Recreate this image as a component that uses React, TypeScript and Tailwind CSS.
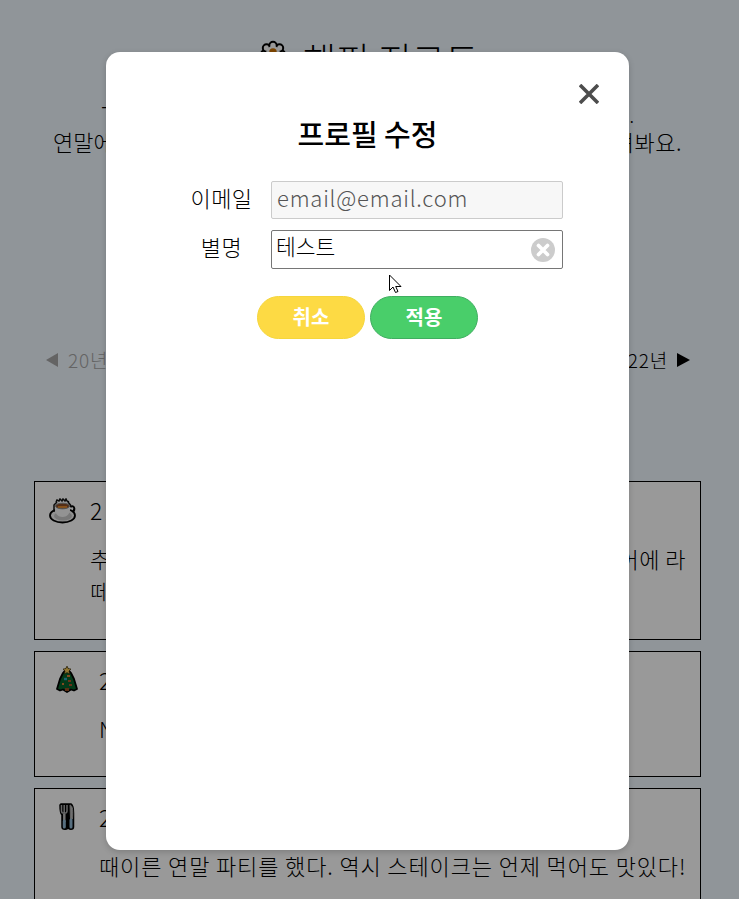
import type { ReactNode } from 'react'

const FlowerIcon = () => (
  <svg className="h-[28px] w-[26px]" viewBox="0 0 26 28">
    <g fill="#fff" stroke="#000" strokeWidth="2">
      <circle cx="4.500" cy="14" r="3.500" />
      <circle cx="21.500" cy="14" r="3.500" />
      <circle cx="6.500" cy="8" r="3.700" />
      <circle cx="19.500" cy="8" r="3.700" />
      <circle cx="13" cy="5.500" r="3.700" />
      <circle cx="9" cy="20" r="4" />
      <circle cx="17" cy="20" r="4" />
    </g>
    <circle cx="13" cy="13" r="7" fill="#fff" />
    <circle cx="13" cy="12" r="3.700" fill="#d07400" />
  </svg>
)

const CoffeeIcon = () => (
  <svg className="h-[26px] w-[28px]" viewBox="0 0 28 26">
    <path d="M21 9c5-3 6 4 1 6" fill="none" stroke="#000" strokeWidth="2" />
    <ellipse cx="13.5" cy="17.5" rx="12.5" ry="7" fill="#f0f0f0" stroke="#000" strokeWidth="1.8" />
    <ellipse cx="14" cy="18" rx="9" ry="4.5" fill="#c8c8c8" />
    <path d="M5.500 8c0 7 3 11 8 11s8-4 8-11l-2-3H8z" fill="#f5f5f5" />
    <path d="M5 14V7l3-3M21.500 9V7L19 4" fill="none" stroke="#111" strokeWidth="1.5" />
    <ellipse cx="13.5" cy="8" rx="7" ry="2.800" fill="#8b4c25" stroke="#8a8a8a" />
    <path d="M9 9h9" stroke="#db842e" strokeWidth="2" />
    <path d="M7 4l1-2 2 1 1-2 2 2 1-2 2 2 1-2 1 2 2 1" fill="none" stroke="#111" strokeWidth="1.5" />
  </svg>
)

const TreeIcon = () => (
  <svg className="h-[27px] w-[22px]" viewBox="0 0 22 27">
    <path d="M11 2L7 7l-3 6-3 10 3 1.500 3-1 4 2.500 4-2.500 3 1 3-1.500-3-10-3-6z" fill="#08612a" stroke="#000" strokeWidth="1.8" strokeLinejoin="round" />
    <path d="M9 22h4v3H9z" fill="#954e22" />
    <path d="M11 0l1.200 2.600 2.800.4-2 2 .5 3-2.500-1.400L8.500 8 9 5 7 3l2.800-.4z" fill="#f0c453" stroke="#2b2000" strokeWidth=".6" />
    <path d="M11 10h3M6 18h2" stroke="#dc7a35" strokeWidth="2" />
    <path d="M8 13h3" stroke="#29a3bf" strokeWidth="2.4" />
    <path d="M12 15h3M13 19h3" stroke="#b3542b" strokeWidth="2" />
  </svg>
)

const CutleryIcon = () => (
  <svg className="h-[27px] w-[16px]" viewBox="0 0 16 27">
    <path d="M2 1h10c2 1 2.500 4 2.500 9v14c0 3-5 3-5.500 0 0 3-6 3-6 0V12C1 10 1 7 1 2z" fill="#000" stroke="#000" strokeWidth="1.500" />
    <path d="M2.500 2v6c0 3 5.500 3 5.500 0V2M5.200 2v10" fill="none" stroke="#aaa" strokeWidth="1.500" />
    <path d="M5.300 11v8" stroke="#bbb" strokeWidth="2.500" />
    <path d="M11 2c3 1 3 6 2.500 14h-2z" fill="#bbb" stroke="#aaa" />
    <path d="M5.300 18v6M12 17v7" stroke="#91b9d6" strokeWidth="3" strokeLinecap="round" />
  </svg>
)

type CardProps = {
  icon: ReactNode
  date: string
  iconClass: string
  className: string
  children: ReactNode
}

const DiaryCard = ({ icon, date, iconClass, className, children }: CardProps) => (
  <article className={`flex shrink-0 border border-black bg-white ${className}`}>
    <div className={`shrink-0 ${iconClass}`}>{icon}</div>
    <div className="flex-1 whitespace-nowrap text-[22px] leading-8">
      <p className="mt-3 text-[23px] tracking-[2px]">{date}</p>
      <div className="mt-4">{children}</div>
    </div>
  </article>
)

const MainPage = () => (
  <main className="flex h-full flex-col bg-[#f0f8ff] pl-[34px] pr-[38px]">
    <h1 className="flex h-[80px] shrink-0 items-start justify-center gap-[17px] pl-[4px] pt-[40px] text-[36px] leading-[40px]">
      <FlowerIcon />
      <span className="-mt-[2px] tracking-[0.4px]">해피 지그트</span>
    </h1>
    <div className="mt-[15px] flex h-[63px] shrink-0 flex-col whitespace-nowrap pl-[19px] pr-[19px] text-[22px] leading-[22px]">
      <p className="flex h-[35px] justify-between pl-[48px] pr-[48px]">
        <span>一 년을 돌아보는</span>
        <span className="mt-[11px] text-[18px] leading-[18px]">일기장이에요.</span>
      </p>
      <p className="flex justify-between">
        <span>연말에 한 해를</span>
        <span className="tracking-[0.5px]">함께 그려봐요.</span>
      </p>
    </div>
    <nav className="mt-[186px] flex h-8 shrink-0 items-center justify-between pl-3 pr-[11px] text-[19px] tracking-[0.8px]">
      <span className="flex items-center gap-[10px] text-[#a7a7a7]">
        <svg className="h-[14px] w-3" viewBox="0 0 12 14"><path d="M12 0v14L0 7z" fill="currentColor" /></svg>
        20년
      </span>
      <span className="flex items-center gap-[9px]">
        22년
        <svg className="h-[14px] w-[13px]" viewBox="0 0 13 14"><path d="M0 0v14l13-7z" /></svg>
      </span>
    </nav>
    <section className="mt-[105px] flex shrink-0 flex-col gap-[11px]">
      <DiaryCard className="h-[159px]" iconClass="w-[55px] pl-[14px] pt-[16px]" icon={<CoffeeIcon />} date="21.12.27">
        <p className="flex justify-between pr-[14px]">
          <span>추운 날</span>
          <span className="tracking-[0.5px]">단어에 라</span>
        </p>
        <p>떼 한 잔</p>
      </DiaryCard>
      <DiaryCard className="h-[126px]" iconClass="w-[64px] pl-[21px] pt-[14px]" icon={<TreeIcon />} date="21.12.25">
        <p>New Year</p>
      </DiaryCard>
      <DiaryCard className="h-[159px]" iconClass="w-[64px] pl-[24px] pt-[14px]" icon={<CutleryIcon />} date="21.12.24">
        <p className="tracking-[0.87px]">때이른 연말 파티를 했다. 역시 스테이크는 언제 먹어도 맛있다!</p>
      </DiaryCard>
    </section>
  </main>
)

const ProfileModal = () => (
  <div className="absolute inset-0 bg-black/40 pl-[106px] pt-[52px]">
    <div role="dialog" className="flex h-[798px] w-[523px] flex-col rounded-[14px] bg-white shadow-[0_2px_6px_rgba(0,0,0,0.18)]">
      <button className="ml-auto mr-[30px] mt-8 h-5 w-5" aria-label="닫기">
        <svg viewBox="0 0 20 20"><path d="M1 1l18 18M19 1L1 19" stroke="#4d4d4d" strokeWidth="3.600" /></svg>
      </button>
      <h2 className="mt-[9px] text-center text-[29px] font-medium leading-[40px]">프로필 수정</h2>
      <form className="mt-[28px] flex flex-col">
        <div className="flex h-[38px]">
          <label className="w-[165px] pl-[66px] text-center text-[22px] leading-[32px] tracking-[0.4px]">이메일</label>
          <div className="w-[292px] rounded-[2px] border border-[#cbcbcb] bg-[#f7f7f7] pl-[5px] text-[22px] leading-[31px] tracking-[0.8px] text-[#545454]">
            email@email.com
          </div>
        </div>
        <div className="mt-[11px] flex h-[39px]">
          <label className="w-[165px] pl-[66px] text-center text-[22px] leading-[32px] tracking-[0.4px]">별명</label>
          <div className="flex w-[292px] items-start justify-between rounded-[2px] border border-[#767676] pl-[4px] pr-[7px] text-[21.5px] leading-[30px]">
            테스트
            <svg className="mt-[7px] h-6 w-6" viewBox="0 0 24 24">
              <circle cx="12" cy="12" r="12" fill="#ccc" />
              <path d="M7.500 7.500l9 9M16.500 7.500l-9 9" stroke="#fff" strokeWidth="3.700" strokeLinecap="round" />
            </svg>
          </div>
        </div>
        <div className="mt-[27px] flex gap-[5px] pl-[151px] text-[20px] font-bold leading-[30px] text-white">
          <button type="button" className="h-[43px] w-[108px] rounded-[22px] border border-[#f5d63c] bg-[#fdda44] pb-[2px]">취소</button>
          <button type="button" className="h-[43px] w-[108px] rounded-[22px] border border-[#3fae60] bg-[#49ce6a] pb-[2px]">적용</button>
        </div>
      </form>
    </div>
  </div>
)

export default function App() {
  return (
    <div className="relative h-[899px] w-[739px] overflow-hidden font-['Noto_Sans_CJK_KR','Noto_Sans',sans-serif] font-light text-black">
      <MainPage />
      <ProfileModal />
      <svg className="absolute left-[389px] top-[274px] h-[20px] w-[13px]" viewBox="0 0 13 20">
        <path d="M.5 1v15.500l3.500-3.500 2.500 5.500 2.500-1-2.300-5H12z" fill="#fff" stroke="#000" />
      </svg>
    </div>
  )
}
